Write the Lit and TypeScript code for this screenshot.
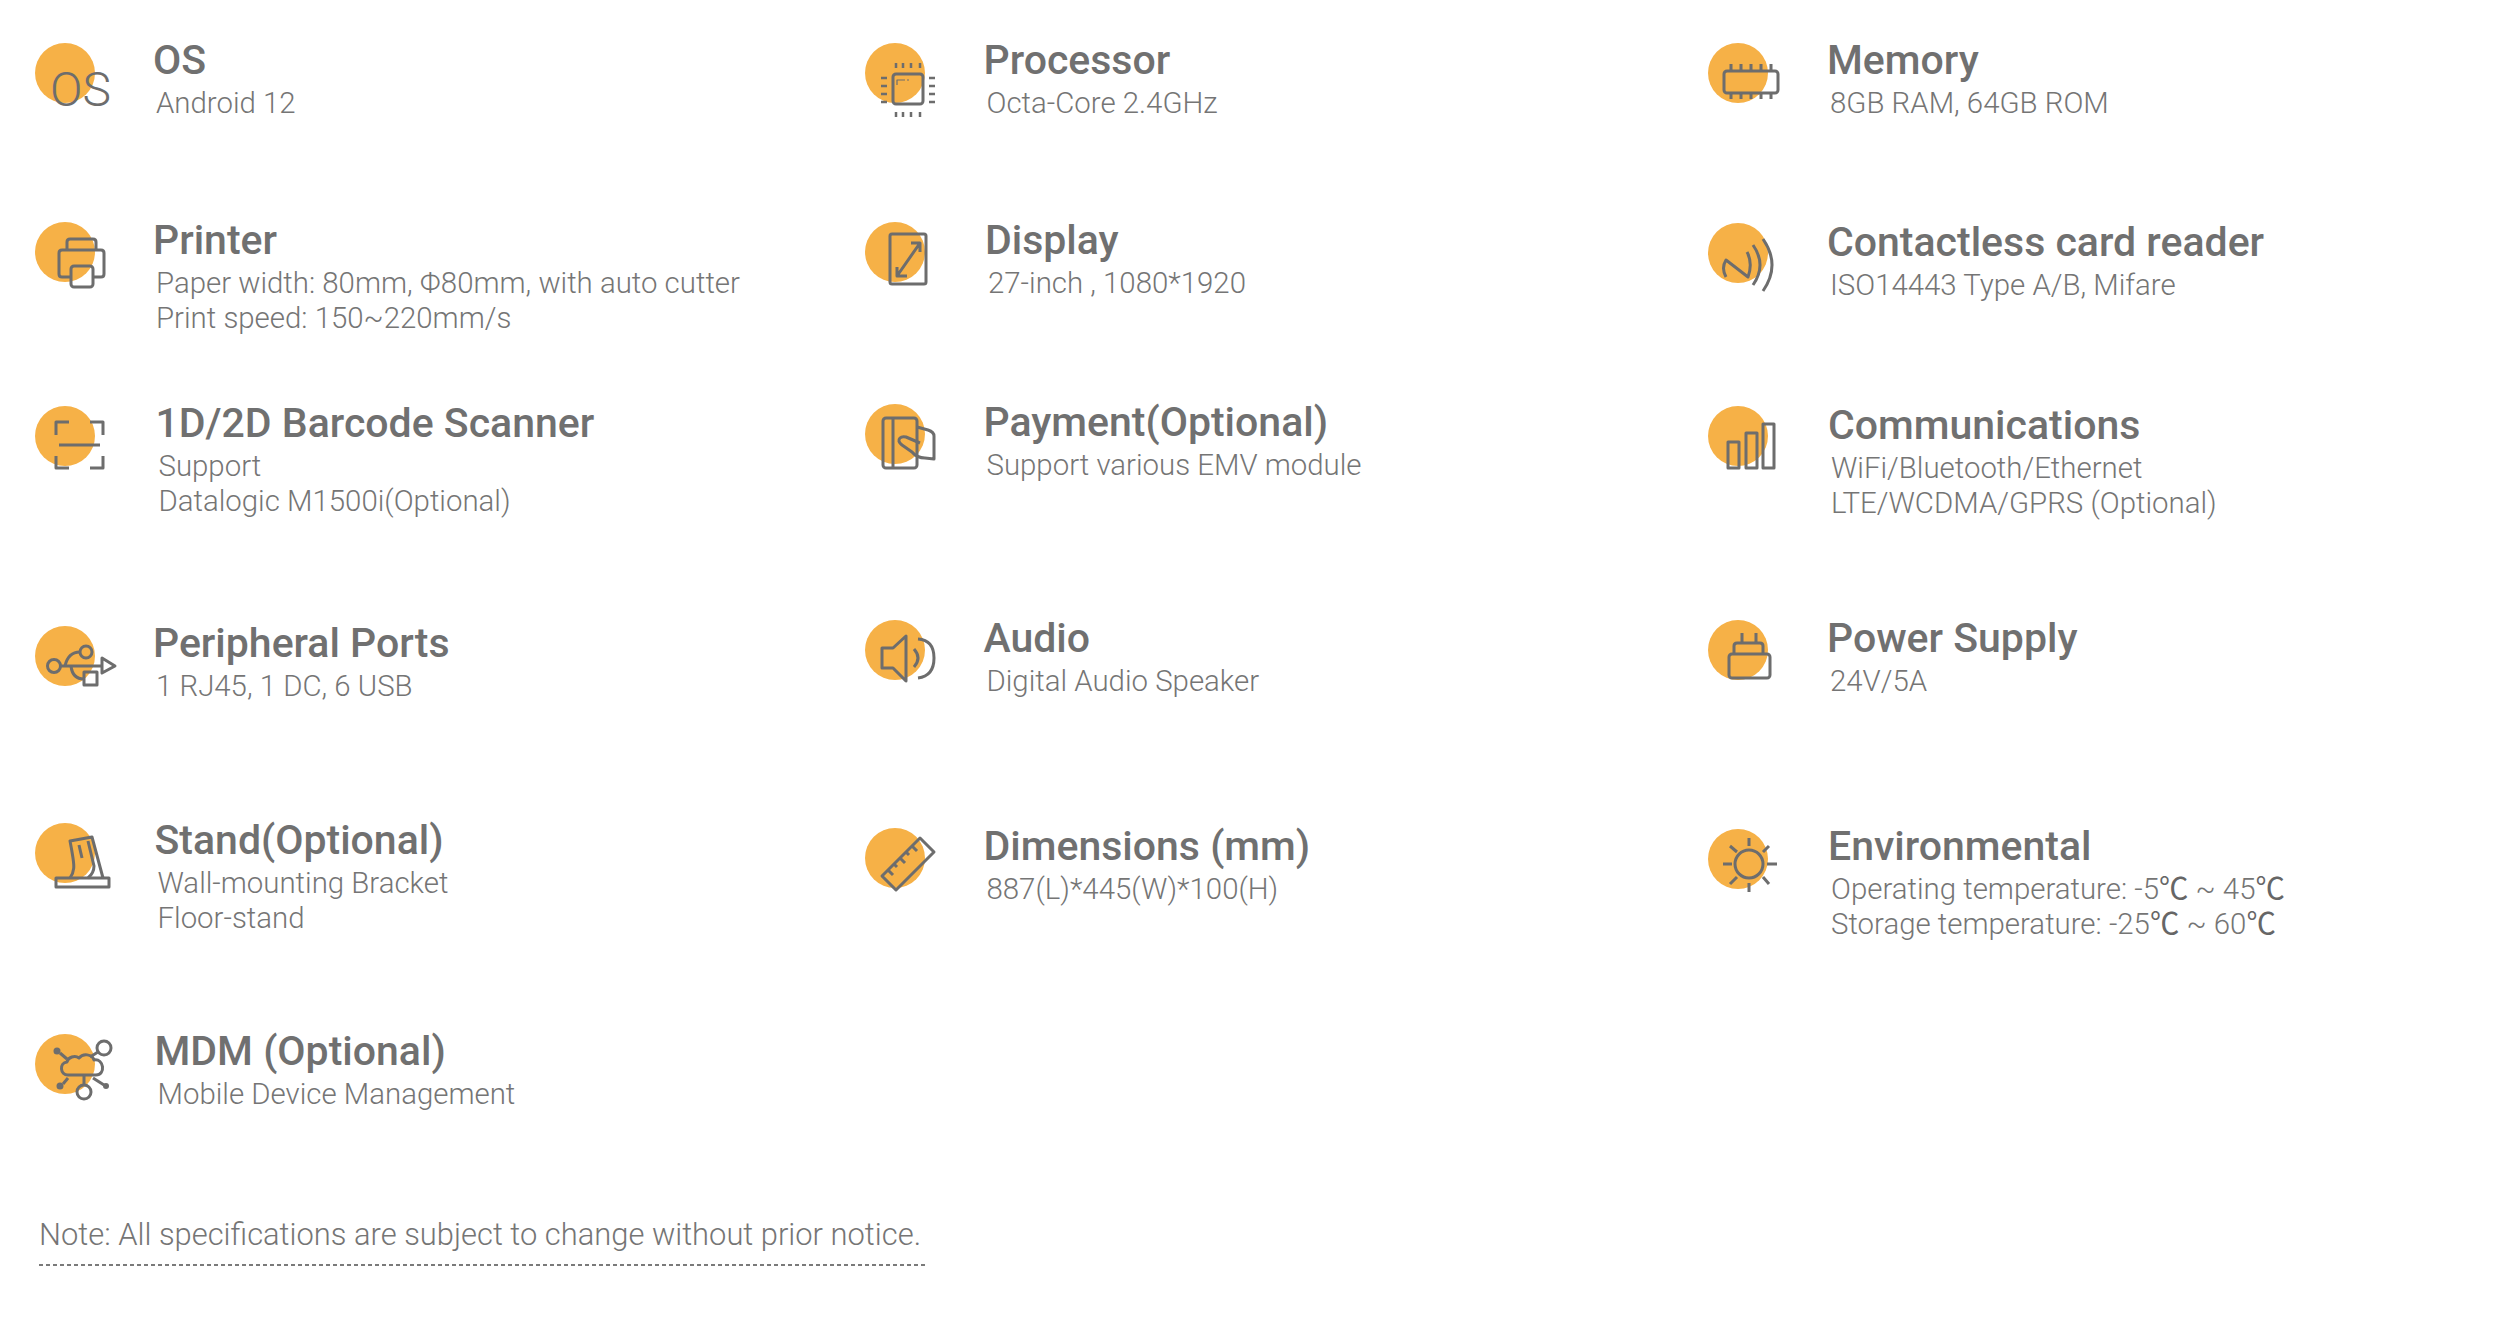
import { LitElement, html, svg, css } from "lit";
import { customElement } from "lit/decorators.js";

const icons: Record<string, { x: number; y: number; art: unknown }> = {
  os: { x: 35, y: 43, art: svg`<text class="ostext" x="50" y="105.500">OS</text>` },
  printer: { x: 35, y: 222, art: svg`<path d="M71 277H62Q59 277 59 274V253Q59 250 62 250H101Q104 250 104 253V274Q104 277 101 277H93"/><path d="M67 250V242Q67 239 70 239H93Q96 239 96 242V250"/><rect x="71" y="266" width="22" height="21" rx="3"/>` },
  scanner: { x: 35, y: 406, art: svg`<path d="M69 422H56V435M90 422H103V435M56 456V468H69M103 456V468H90M59 445H100"/>` },
  usb: { x: 35, y: 626, art: svg`<circle cx="54" cy="666" r="6.500"/><path d="M60.500 666H102"/><path d="M102 658L115 666L102 673Z"/><circle cx="86" cy="652" r="6"/><path d="M65 666C67 657 72 652 80 652"/><path d="M71 666C72 675 77 679 84 679"/><rect x="84" y="672" width="13" height="13"/>` },
  stand: { x: 35, y: 823, art: svg`<rect x="56" y="878" width="53" height="9"/><path d="M70 878C75 871 74 865 73 858C72 851 71 846 70 841L92 837L103 878"/><path d="M88 841L94 866Q94 873 88 878"/><path d="M79 845L82 858"/>` },
  mdm: { x: 35, y: 1034, art: svg`<path d="M68 1075C60 1075 59 1063 67 1062C68 1057 75 1055 79 1058C83 1053 92 1054 94 1060C104 1058 106 1075 96 1075Z"/><circle class="solid" cx="57" cy="1051" r="3.500"/><path d="M60 1053L67 1059"/><circle cx="104" cy="1048" r="7"/><path d="M98 1052L90 1057"/><circle class="solid" cx="60" cy="1086" r="3.500"/><path d="M63 1084L68 1078"/><circle cx="84" cy="1092" r="7"/><path d="M84 1085V1075"/><circle class="solid" cx="106" cy="1086" r="3"/><path d="M104 1085L93 1078"/>` },
  cpu: { x: 865, y: 43, art: svg`<rect x="893" y="74" width="30" height="30" rx="3"/><path class="hair" d="M897 85V80H905M907 80H909"/><path class="thin" d="M896 63V68M903 63V68M911 63V68M920 63V68M896 112V117M903 112V117M911 112V117M920 112V117M881 78H887M881 86H887M881 94H887M881 102H887M929 78H935M929 86H935M929 94H935M929 102H935"/>` },
  display: { x: 865, y: 222, art: svg`<rect x="890" y="234" width="36" height="50" rx="2"/><path d="M897 276L920 243M911 243H920V252M897 267V276H907"/>` },
  payment: { x: 865, y: 404, art: svg`<rect x="883" y="418" width="34" height="50" rx="3"/><path d="M893 418V468"/><path d="M917 427L928 430Q934 432 934 436V459L925 458Q917 458 912 452L902 445Q897 441 900 438Q902 436 906 437L920 443"/>` },
  audio: { x: 865, y: 620, art: svg`<path d="M882 648H893L906 636V681L893 668H882Z"/><path d="M914 649Q922 658 914 667"/><path d="M918 639Q934 640 934 658Q934 676 918 678"/>` },
  ruler: { x: 865, y: 828, art: svg`<path d="M920 838L934 852L896 890L882 876Z"/><path d="M888 870L893 875M894 864L897 867M900 858L905 863M906 852L909 855M912 846L917 851"/>` },
  memory: { x: 1708, y: 43, art: svg`<rect x="1724" y="71" width="54" height="22" rx="3"/><path d="M1731 64V71M1741 64V71M1751 64V71M1761 64V71M1771 64V71M1731 93V99M1741 93V99M1751 93V99M1761 93V99M1771 93V99"/>` },
  nfc: { x: 1708, y: 223, art: svg`<path d="M1726 277Q1721 268 1726 260L1748 277Q1753 263 1747 252"/><path d="M1753 245Q1767 265 1753 285"/><path d="M1763 239Q1781 265 1763 291"/>` },
  bars: { x: 1708, y: 406, art: svg`<rect x="1728" y="442" width="11" height="26"/><rect x="1746" y="433" width="11" height="35"/><rect x="1763" y="424" width="11" height="44"/>` },
  power: { x: 1708, y: 620, art: svg`<path d="M1742 633V643M1756 633V643"/><path d="M1734 654V646Q1734 643 1737 643H1760Q1763 643 1763 646V654"/><rect x="1729" y="654" width="41" height="24" rx="3"/>` },
  sun: { x: 1708, y: 829, art: svg`<circle cx="1749" cy="864" r="14"/><path d="M1749 838V846M1749 883V892M1723 864H1732M1767 864H1777M1730 846L1737 852M1769 846L1763 852M1730 884L1737 877M1769 884L1763 877"/>` },
};

type Spec = { icon: string; title: string; lines: string[]; colX: number; rowY: number; titleX: number; titleY: number };

const c1 = 35, c2 = 865, c3 = 1708;
const r = [43, 222, 404, 619, 823, 1034];

const specs: Spec[] = [
  { icon: "os", title: "OS", lines: ["Android 12"], colX: c1, rowY: r[0], titleX: 153, titleY: 60 },
  { icon: "cpu", title: "Processor", lines: ["Octa-Core 2.4GHz"], colX: c2, rowY: r[0], titleX: 983.5, titleY: 60 },
  { icon: "memory", title: "Memory", lines: ["8GB RAM, 64GB ROM"], colX: c3, rowY: r[0], titleX: 1827, titleY: 60 },
  { icon: "printer", title: "Printer", lines: ["Paper width: 80mm, Φ80mm, with auto cutter", "Print speed: 150~220mm/s"], colX: c1, rowY: r[1], titleX: 153, titleY: 240 },
  { icon: "display", title: "Display", lines: ["27-inch , 1080*1920"], colX: c2, rowY: r[1], titleX: 985, titleY: 240 },
  { icon: "nfc", title: "Contactless card reader", lines: ["ISO14443 Type A/B, Mifare"], colX: c3, rowY: r[1], titleX: 1827, titleY: 242 },
  { icon: "scanner", title: "1D/2D Barcode Scanner", lines: ["Support", "Datalogic M1500i(Optional)"], colX: c1, rowY: r[2], titleX: 155.500, titleY: 423 },
  { icon: "payment", title: "Payment(Optional)", lines: ["Support various EMV module"], colX: c2, rowY: r[2], titleX: 983.5, titleY: 422 },
  { icon: "bars", title: "Communications", lines: ["WiFi/Bluetooth/Ethernet", "LTE/WCDMA/GPRS (Optional)"], colX: c3, rowY: r[2], titleX: 1828, titleY: 425 },
  { icon: "usb", title: "Peripheral Ports", lines: ["1 RJ45, 1 DC, 6 USB"], colX: c1, rowY: r[3], titleX: 153, titleY: 643 },
  { icon: "audio", title: "Audio", lines: ["Digital Audio Speaker"], colX: c2, rowY: r[3], titleX: 983.5, titleY: 638 },
  { icon: "power", title: "Power Supply", lines: ["24V/5A"], colX: c3, rowY: r[3], titleX: 1827, titleY: 638 },
  { icon: "stand", title: "Stand(Optional)", lines: ["Wall-mounting Bracket", "Floor-stand"], colX: c1, rowY: r[4], titleX: 154.500, titleY: 840 },
  { icon: "ruler", title: "Dimensions (mm)", lines: ["887(L)*445(W)*100(H)"], colX: c2, rowY: r[4], titleX: 983.5, titleY: 846 },
  { icon: "sun", title: "Environmental", lines: ["Operating temperature: -5℃ ~ 45℃", "Storage temperature: -25℃ ~ 60℃"], colX: c3, rowY: r[4], titleX: 1828, titleY: 846 },
  { icon: "mdm", title: "MDM (Optional)", lines: ["Mobile Device Management"], colX: c1, rowY: r[5], titleX: 154.500, titleY: 1051 },
];

const withDegrees = (l: string) => {
  const parts = l.split("℃");
  return parts.map((p, i) => (i < parts.length - 1 ? html`${p}<span class="deg">℃</span>` : p));
};

@customElement("app-root")
export class AppRoot extends LitElement {
  static styles = css`
    :host { display: block; width: 2520px; height: 1320px; background: #fff; font-family: Roboto, "Noto Sans CJK SC", sans-serif; overflow: hidden; }
    .grid {
      display: grid;
      grid-template-columns: 830px 843px 812px;
      grid-template-rows: 179px 182px 215px 204px 211px 181px;
      padding: 43px 0 0 35px;
    }
    .item { display: flex; align-items: flex-start; min-width: 0; }
    .ic { flex: none; display: block; overflow: visible; fill: none; stroke: #6d6d6d; stroke-width: 3; stroke-linejoin: round; stroke-linecap: butt; }
    .ic .blob { fill: #f6b147; stroke: none; }
    .ic .solid { fill: #6d6d6d; stroke: none; }
    .ic .thin { stroke-width: 2.500; }
    .ic .hair { stroke-width: 1.200; }
    .ic .ostext { fill: #6d6d6d; stroke: none; font-family: Roboto, sans-serif; font-weight: 300; font-size: 48px; }
    .text { flex: none; }
    .title { margin: 0; font-size: 41px; line-height: 46px; font-weight: 500; color: #707070; white-space: nowrap; }
    .sub { margin: 3px 0 0 3px; font-size: 29.400px; line-height: 35px; font-weight: 300; color: #757575; white-space: nowrap; }
    .deg { font-weight: 400; color: #666; }
    .note { margin: 0 0 0 39px; width: 889px; }
    .note p { margin: 0; font-size: 30.900px; line-height: 40px; font-weight: 300; color: #757575; white-space: nowrap; }
    .rule { margin-top: 9px; height: 2px; background: repeating-linear-gradient(90deg, #7a7a7a 0 4px, transparent 4px 7px); }
  `;

  render() {
    return html`
      <div class="grid">
        ${specs.map((s) => {
          const ic = icons[s.icon];
          return html`
            <div class="item">
              <svg class="ic" width="90" height="70" style="margin: ${ic.y - s.rowY}px 0 0 ${ic.x - s.colX}px"
                viewBox="${ic.x} ${ic.y} 90 70">
                <circle class="blob" cx=${ic.x + 30} cy=${ic.y + 30} r="30"></circle>
                ${ic.art}
              </svg>
              <div class="text" style="margin: ${s.titleY - 23 - s.rowY}px 0 0 ${s.titleX - ic.x - 90}px">
                <h3 class="title">${s.title}</h3>
                <div class="sub">${s.lines.map((l) => html`<div>${withDegrees(l)}</div>`)}</div>
              </div>
            </div>`;
        })}
      </div>
      <div class="note">
        <p>Note: All specifications are subject to change without prior notice.</p>
        <div class="rule"></div>
      </div>
    `;
  }
}
